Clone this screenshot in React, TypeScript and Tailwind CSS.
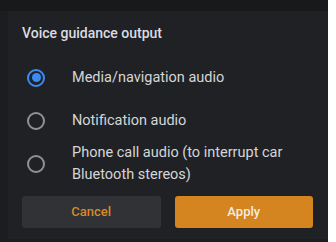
import React from 'react';

const options = [
  { id: 'media', label: 'Media/navigation audio' },
  { id: 'notif', label: 'Notification audio' },
  { id: 'phone', label: 'Phone call audio (to interrupt car Bluetooth stereos)' },
];

const Radio: React.FC<{ checked: boolean }> = ({ checked }) => (
  <div
    className={`w-[18px] h-[18px] rounded-full border-2 flex items-center justify-center shrink-0 ${
      checked ? 'border-[#3b8bf5]' : 'border-[#8e9296]'
    }`}
  >
    {checked && <div className="w-[9px] h-[9px] rounded-full bg-[#3b8bf5]" />}
  </div>
);

export default function App() {
  const selected = 'media';

  return (
    <div className="w-[336px] h-[242px] bg-white flex" style={{ fontFamily: 'Roboto, "Liberation Sans", sans-serif' }}>
      <div className="w-[328px] h-full bg-[#1c1d1f] flex flex-col">
        <div className="h-[11px] bg-[#18191b]" />
        <div className="flex flex-1">
          <div className="w-2" />
          <div className="flex-1 bg-[#202124] h-[228px] flex flex-col">
            <div className="h-[45px] flex items-center pl-[14px] text-[14px] font-medium text-[#dadce0]">
              Voice guidance output
            </div>
            {options.map(o => (
              <div key={o.id} className="h-[43px] flex items-center pl-[19px] pr-4">
                <Radio checked={o.id === selected} />
                <span className="ml-[27px] text-[14.5px] leading-[22px] text-[#d4d6d9]">{o.label}</span>
              </div>
            ))}
            <div className="flex gap-[14px] pl-[14px] pr-[15px] mt-[11px]">
              <button className="flex-1 h-8 rounded-[3px] bg-[#303235] text-[#d6892a] text-[13px] font-medium">
                Cancel
              </button>
              <button className="flex-1 h-8 rounded-[3px] bg-[#d4851f] text-[#f3ece2] text-[13px] font-medium">
                Apply
              </button>
            </div>
          </div>
        </div>
      </div>
    </div>
  );
}
